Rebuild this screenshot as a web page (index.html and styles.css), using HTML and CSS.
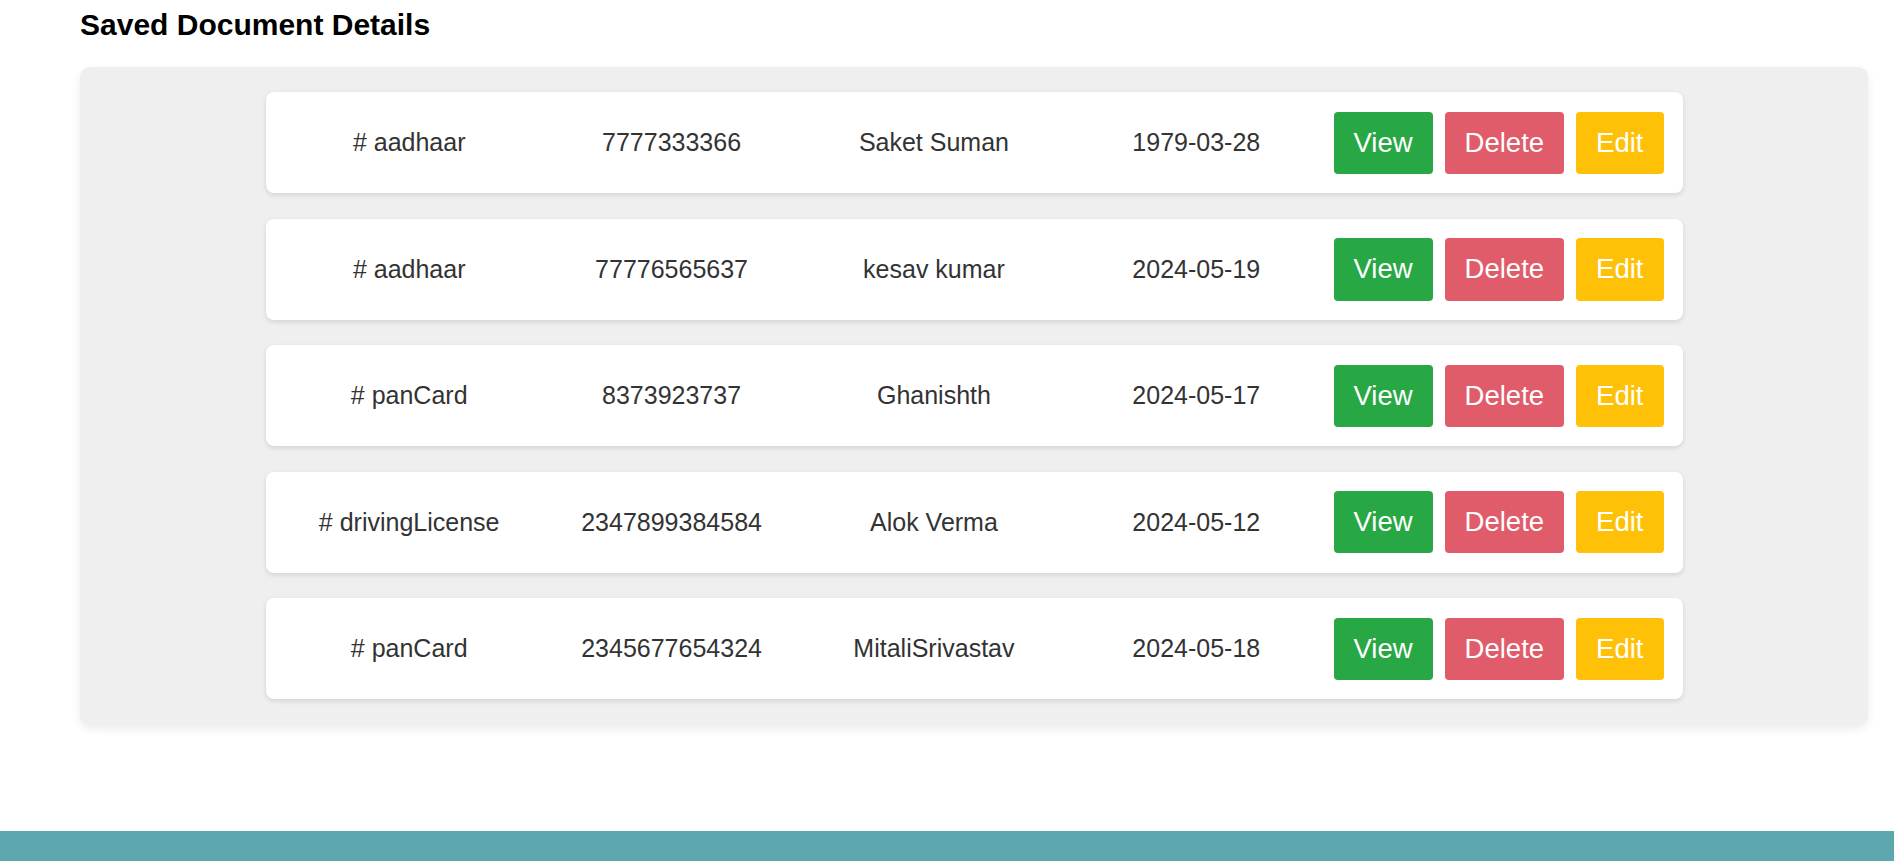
FILE: index.html
```html
<!DOCTYPE html>
<html lang="en">
<head>
<meta charset="utf-8">
<title>Saved Document Details</title>
<link rel="stylesheet" href="styles.css">
</head>
<body>
<main class="page">
  <h2 class="title">Saved Document Details</h2>
  <section class="panel">
    <div class="doc-card">
      <span class="cell"># aadhaar</span>
      <span class="cell">7777333366</span>
      <span class="cell">Saket Suman</span>
      <span class="cell">1979-03-28</span>
      <div class="actions">
        <button class="btn btn-view">View</button>
        <button class="btn btn-delete">Delete</button>
        <button class="btn btn-edit">Edit</button>
      </div>
    </div>
    <div class="doc-card">
      <span class="cell"># aadhaar</span>
      <span class="cell">77776565637</span>
      <span class="cell">kesav kumar</span>
      <span class="cell">2024-05-19</span>
      <div class="actions">
        <button class="btn btn-view">View</button>
        <button class="btn btn-delete">Delete</button>
        <button class="btn btn-edit">Edit</button>
      </div>
    </div>
    <div class="doc-card">
      <span class="cell"># panCard</span>
      <span class="cell">8373923737</span>
      <span class="cell">Ghanishth</span>
      <span class="cell">2024-05-17</span>
      <div class="actions">
        <button class="btn btn-view">View</button>
        <button class="btn btn-delete">Delete</button>
        <button class="btn btn-edit">Edit</button>
      </div>
    </div>
    <div class="doc-card">
      <span class="cell"># drivingLicense</span>
      <span class="cell">2347899384584</span>
      <span class="cell">Alok Verma</span>
      <span class="cell">2024-05-12</span>
      <div class="actions">
        <button class="btn btn-view">View</button>
        <button class="btn btn-delete">Delete</button>
        <button class="btn btn-edit">Edit</button>
      </div>
    </div>
    <div class="doc-card">
      <span class="cell"># panCard</span>
      <span class="cell">2345677654324</span>
      <span class="cell">MitaliSrivastav</span>
      <span class="cell">2024-05-18</span>
      <div class="actions">
        <button class="btn btn-view">View</button>
        <button class="btn btn-delete">Delete</button>
        <button class="btn btn-edit">Edit</button>
      </div>
    </div>
  </section>
</main>
<footer class="footer"></footer>
</body>
</html>
```

FILE: styles.css
```css
html, body {
  margin: 0;
  padding: 0;
  background: #ffffff;
  font-family: "Liberation Sans", Arial, sans-serif;
}

.page {
  padding: 8px 26px 0 80px;
}

.title {
  margin: 0 0 25px 0;
  font-size: 30px;
  line-height: 34px;
  font-weight: 700;
  color: #000000;
}

.panel {
  background: #efefef;
  border-radius: 10px;
  box-shadow: 0 4px 10px rgba(0, 0, 0, 0.08);
  padding: 25.4px 0;
  display: flex;
  flex-direction: column;
  align-items: center;
  gap: 25.4px;
  margin-bottom: 106px;
}

.doc-card {
  width: 1417px;
  box-sizing: border-box;
  background: #ffffff;
  border-radius: 8px;
  box-shadow: 0 2px 5px rgba(0, 0, 0, 0.12);
  padding: 19.4px 13px 19.4px 12.5px;
  display: flex;
  align-items: center;
}

.cell {
  flex: 1;
  text-align: center;
  font-size: 25px;
  color: #333333;
  white-space: nowrap;
}

.actions {
  display: flex;
  align-items: center;
}

.btn {
  margin: 0 6px;
  height: 62.3px;
  padding: 0 20px;
  border: none;
  border-radius: 4px;
  font-family: "Liberation Sans", Arial, sans-serif;
  font-size: 27.5px;
  color: #ffffff;
}

.btn-view {
  background: #28a745;
}

.btn-delete {
  background: #e15c6a;
}

.btn-edit {
  background: #ffc107;
}

.footer {
  height: 31px;
  background: #5ca8ae;
}
```
